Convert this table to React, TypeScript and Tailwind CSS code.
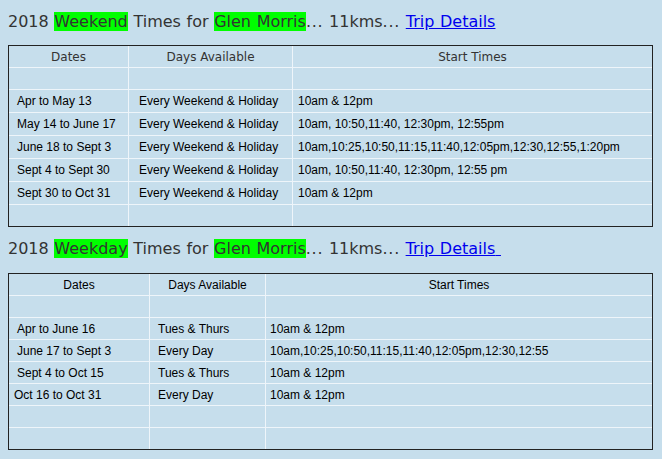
import React from "react";

type Cell = { text: string; pad: string };

const ARIAL = "font-['Liberation_Sans',Arial,sans-serif]";
const DEJAVU = "font-['DejaVu_Sans',Verdana,sans-serif]";

function Dots() {
  return <span className="tracking-[0.75px]">...</span>;
}

function Heading({ kind, trail }: { kind: string; trail?: boolean }) {
  return (
    <div className={`${DEJAVU} text-[16px] leading-[19px] text-[#333] whitespace-nowrap [word-spacing:0.55px]`}>
      2018 <span className="bg-[#00ff00]">{kind}</span> Times for{" "}
      <span className="bg-[#00ff00]">Glen Morris</span>
      <Dots /> 11kms
      <Dots />{" "}
      <a href="#" className="text-[#0000ee] underline">
        Trip Details{trail ? "\u00a0" : ""}
      </a>
    </div>
  );
}

function Table({
  widths,
  heights,
  header,
  headerFont,
  rows,
}: {
  widths: string[];
  heights: string[];
  header: string[];
  headerFont: string;
  rows: (Cell[] | null)[];
}) {
  const all: ({ header: true } | { cells: Cell[] | null })[] = [
    { header: true },
    ...rows.map((r) => ({ cells: r })),
  ];
  return (
    <div className="w-[645px] border border-[#222]">
      {all.map((row, ri) => {
        const last = ri === all.length - 1;
        return (
          <div
            key={ri}
            className={`flex ${heights[ri]} ${last ? "" : "border-b border-[#eef5fa]"}`}
          >
            {widths.map((w, ci) => {
              const lastCol = ci === widths.length - 1;
              let content: React.ReactNode = null;
              let cls = "";
              if ("header" in row) {
                content = header[ci];
                cls = `justify-center ${headerFont}`;
              } else if (row.cells) {
                content = row.cells[ci].text;
                cls = `${row.cells[ci].pad} ${ARIAL} text-black`;
              }
              return (
                <div
                  key={ci}
                  className={`${w} ${lastCol ? "flex-1" : "border-r border-[#eef5fa]"} flex items-center whitespace-nowrap text-[12px] ${cls}`}
                >
                  {content}
                </div>
              );
            })}
          </div>
        );
      })}
    </div>
  );
}

export default function App() {
  const t1 = (a: string, b: string, c: string): Cell[] => [
    { text: a, pad: "pl-2" },
    { text: b, pad: "pl-[10px]" },
    { text: c, pad: "pl-[5px]" },
  ];
  const t2 = (a: string, b: string, c: string, p1 = "pl-2"): Cell[] => [
    { text: a, pad: p1 },
    { text: b, pad: "pl-2" },
    { text: c, pad: "pl-[4px]" },
  ];
  return (
    <div className="min-h-[459px] w-full bg-[#c6deec] pl-2 pt-3">
      <Heading kind="Weekend" />
      <div className="mt-[14px]">
        <Table
          widths={["w-[120px]", "w-[164px]", "w-[359px]"]}
          heights={["h-[22px]", "h-[22px]", "h-[23px]", "h-[23px]", "h-[23px]", "h-[23px]", "h-[23px]", "h-[21px]"]}
          header={["Dates", "Days Available", "Start Times"]}
          headerFont={`${DEJAVU} text-[#333]`}
          rows={[
            null,
            t1("Apr to May 13", "Every Weekend & Holiday", "10am & 12pm"),
            t1("May 14 to June 17", "Every Weekend & Holiday", "10am, 10:50,11:40, 12:30pm, 12:55pm"),
            t1("June 18 to Sept 3", "Every Weekend & Holiday", "10am,10:25,10:50,11:15,11:40,12:05pm,12:30,12:55,1:20pm"),
            t1("Sept 4 to Sept 30", "Every Weekend & Holiday", "10am, 10:50,11:40, 12:30pm, 12:55 pm"),
            t1("Sept 30 to Oct 31", "Every Weekend & Holiday", "10am & 12pm"),
            null,
          ]}
        />
      </div>
      <div className="mt-3">
        <Heading kind="Weekday" trail />
      </div>
      <div className="mt-[15px]">
        <Table
          widths={["w-[141px]", "w-[116px]", "w-[386px]"]}
          heights={["h-[22px]", "h-[22px]", "h-[22px]", "h-[22px]", "h-[22px]", "h-[22px]", "h-[22px]", "h-[21px]"]}
          header={["Dates", "Days Available", "Start Times"]}
          headerFont={`${ARIAL} text-black`}
          rows={[
            null,
            t2("Apr to June 16", "Tues & Thurs", "10am & 12pm"),
            t2("June 17 to Sept 3", "Every Day", "10am,10:25,10:50,11:15,11:40,12:05pm,12:30,12:55"),
            t2("Sept 4 to Oct 15", "Tues & Thurs", "10am & 12pm"),
            t2("Oct 16 to Oct 31", "Every Day", "10am & 12pm", "pl-[5px]"),
            null,
            null,
          ]}
        />
      </div>
    </div>
  );
}
